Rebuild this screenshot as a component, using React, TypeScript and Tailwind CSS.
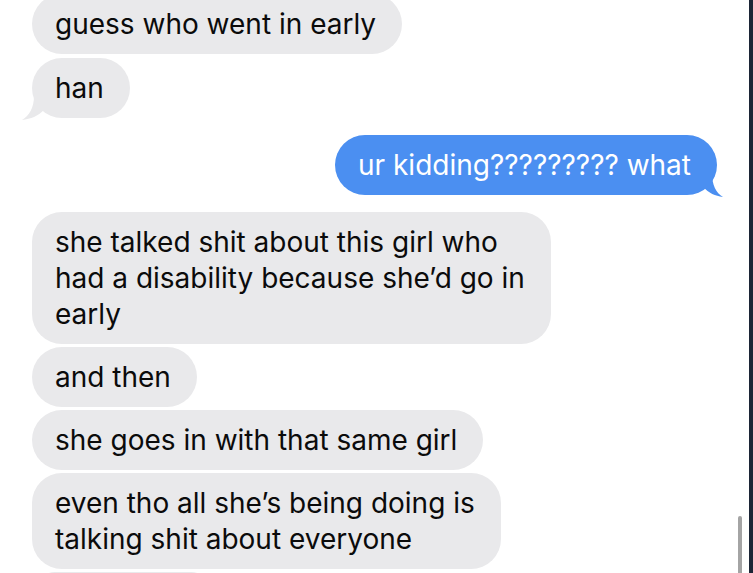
import React from "react";

type Msg = {
  id: number;
  lines: string[];
  mine?: boolean;
  tail?: boolean;
  gapTop?: string;
};

const messages: Msg[] = [
  { id: 1, lines: ["guess who went in early"] },
  { id: 2, lines: ["han"], tail: true, gapTop: "mt-[4px]" },
  { id: 3, lines: ["ur kidding????????? what"], mine: true, tail: true, gapTop: "mt-[17px]" },
  {
    id: 4,
    lines: ["she talked shit about this girl who", "had a disability because she\u2019d go in", "early"],
    gapTop: "mt-[17px]",
  },
  { id: 5, lines: ["and then"], gapTop: "mt-[3px]" },
  { id: 6, lines: ["she goes in with that same girl"], gapTop: "mt-[3px]" },
  { id: 7, lines: ["even tho all she\u2019s being doing is", "talking shit about everyone"], gapTop: "mt-[3px]" },
];

function Tail({ mine }: { mine?: boolean }) {
  // little curled tail under the last bubble of a run
  if (mine) {
    return (
      <svg className="absolute right-[-6px] bottom-[-2px]" width="22" height="24" viewBox="0 0 22 24">
        <path d="M2 0 L2 14 C8 20 14 23 22 24 C15 20 11 12 11 0 Z" fill="#4b8ff1" />
      </svg>
    );
  }
  return (
    <svg className="absolute left-[-10px] bottom-[-2px]" width="24" height="24" viewBox="0 0 24 24">
      <path d="M22 0 L22 14 C16 20 9 23 0 24 C7 20 12 12 12 0 Z" fill="#e9e9eb" />
    </svg>
  );
}

function Bubble({ msg }: { msg: Msg }) {
  return (
    <div className={`flex ${msg.mine ? "justify-end" : "justify-start"} ${msg.gapTop ?? ""}`}>
      <div
        className={`relative rounded-[30px] pl-[23px] pr-[26px] py-[12px] text-[28px] leading-[36px] whitespace-nowrap ${
          msg.mine ? "bg-[#4b8ff1] text-white" : "bg-[#e9e9eb] text-[#0b0b0b]"
        }`}
      >
        {msg.lines.map((l, i) => (
          <div key={i}>{l}</div>
        ))}
        {msg.tail && <Tail mine={msg.mine} />}
      </div>
    </div>
  );
}

export default function App() {
  return (
    <div className="flex h-screen w-full overflow-hidden bg-white" style={{ fontFamily: "Inter, 'Liberation Sans', sans-serif" }}>
      <div className="relative flex-1">
        <div className="flex flex-col px-[32px] mt-[-6px]">
          {messages.map((m) => (
            <Bubble key={m.id} msg={m} />
          ))}
          <div className="mt-[3px] h-[40px] w-[176px] rounded-[30px] bg-[#e9e9eb] ml-[3px]" />
        </div>
        {/* scroll indicator */}
        <div className="absolute right-[7px] top-[516px] h-[70px] w-[4px] rounded-full bg-[#a4a4a4]" />
      </div>
      <div className="w-[4px] bg-[#1c2536]" />
    </div>
  );
}
